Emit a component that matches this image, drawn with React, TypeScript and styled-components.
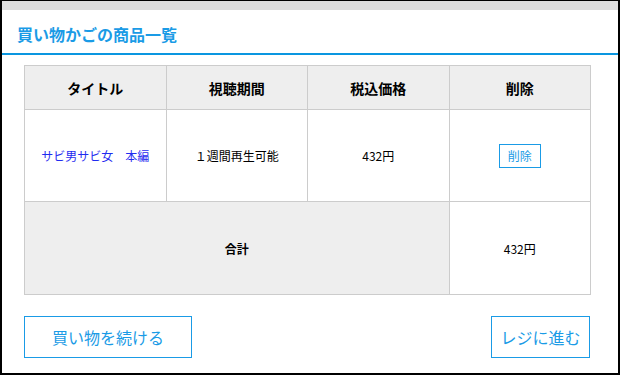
import styled, { createGlobalStyle } from 'styled-components';

const GlobalStyle = createGlobalStyle`
    html, body {
        margin: 0;
        padding: 0;
        background: #fff;
    }
    body {
        font-family: 'Noto Sans CJK JP', 'Noto Sans', sans-serif;
        color: #000;
    }
`;

const blue = '#1a9be6';

interface CartItem {
    title: string;
    period: string;
    price: number;
}

const items: CartItem[] = [
    { title: 'サビ男サビ女　本編', period: '１週間再生可能', price: 432 },
];

const App = () => {
    const total = items.reduce((sum, item) => sum + item.price, 0);

    return (
        <>
            <GlobalStyle />
            <Frame>
                <TopBar />
                <Header>
                    <h1>買い物かごの商品一覧</h1>
                </Header>
                <Content>
                    <CartTable>
                        <thead>
                            <tr>
                                <HeadCell>タイトル</HeadCell>
                                <HeadCell>視聴期間</HeadCell>
                                <HeadCell>税込価格</HeadCell>
                                <HeadCell>削除</HeadCell>
                            </tr>
                        </thead>
                        <tbody>
                            {items.map((item) => (
                                <ItemRow key={item.title}>
                                    <Cell>
                                        <TitleLink href='#'>{item.title}</TitleLink>
                                    </Cell>
                                    <Cell>{item.period}</Cell>
                                    <Cell>{item.price}円</Cell>
                                    <Cell>
                                        <DeleteButton>削除</DeleteButton>
                                    </Cell>
                                </ItemRow>
                            ))}
                            <TotalRow>
                                <TotalLabel colSpan={3}>合計</TotalLabel>
                                <Cell>{total}円</Cell>
                            </TotalRow>
                        </tbody>
                    </CartTable>
                    <Actions>
                        <ActionButton $wide>買い物を続ける</ActionButton>
                        <ActionButton>レジに進む</ActionButton>
                    </Actions>
                </Content>
            </Frame>
        </>
    );
};

const Frame = styled.div`
    box-sizing: border-box;
    width: 620px;
    height: 375px;
    border: 2px solid #000;
    border-top-width: 1px;
    display: flex;
    flex-direction: column;
    overflow: hidden;
`;

const TopBar = styled.div`
    height: 9px;
    background: #dddddd;
`;

const Header = styled.header`
    padding: 14px 15px 8px;
    border-bottom: 2px solid #0a96e0;
    h1 {
        margin: 0;
        font-size: 16px;
        line-height: 21px;
        font-weight: bold;
        color: ${blue};
    }
`;

const Content = styled.div`
    padding: 10px 27px 0 22px;
    display: flex;
    flex-direction: column;
    gap: 21px;
`;

const CartTable = styled.table`
    width: 567px;
    border-collapse: collapse;
    table-layout: fixed;
    font-size: 12px;
`;

const HeadCell = styled.th`
    height: 43px;
    padding: 0;
    background: #eeeeee;
    border: 1px solid #cccccc;
    font-size: 14px;
    font-weight: bold;
    text-align: center;
    vertical-align: middle;
`;

const Cell = styled.td`
    padding: 0;
    border: 1px solid #cccccc;
    text-align: center;
    vertical-align: middle;
`;

const ItemRow = styled.tr`
    height: 92px;
`;

const TotalRow = styled.tr`
    height: 93px;
`;

const TotalLabel = styled(Cell)`
    background: #eeeeee;
    font-weight: bold;
`;

const TitleLink = styled.a`
    color: #1f2cf0;
    text-decoration: none;
`;

const DeleteButton = styled.button`
    box-sizing: border-box;
    width: 42px;
    height: 24px;
    padding: 0;
    background: #fff;
    border: 1px solid ${blue};
    color: ${blue};
    font-family: inherit;
    font-size: 12px;
    cursor: pointer;
`;

const Actions = styled.div`
    display: flex;
    justify-content: space-between;
    padding-right: 1px;
`;

const ActionButton = styled.button<{ $wide?: boolean }>`
    box-sizing: border-box;
    width: ${({ $wide }) => ($wide ? '168px' : '99px')};
    height: 42px;
    padding: 0;
    background: #fff;
    border: 1px solid ${blue};
    color: ${blue};
    font-family: inherit;
    font-size: 16px;
    cursor: pointer;
`;

export default App;
